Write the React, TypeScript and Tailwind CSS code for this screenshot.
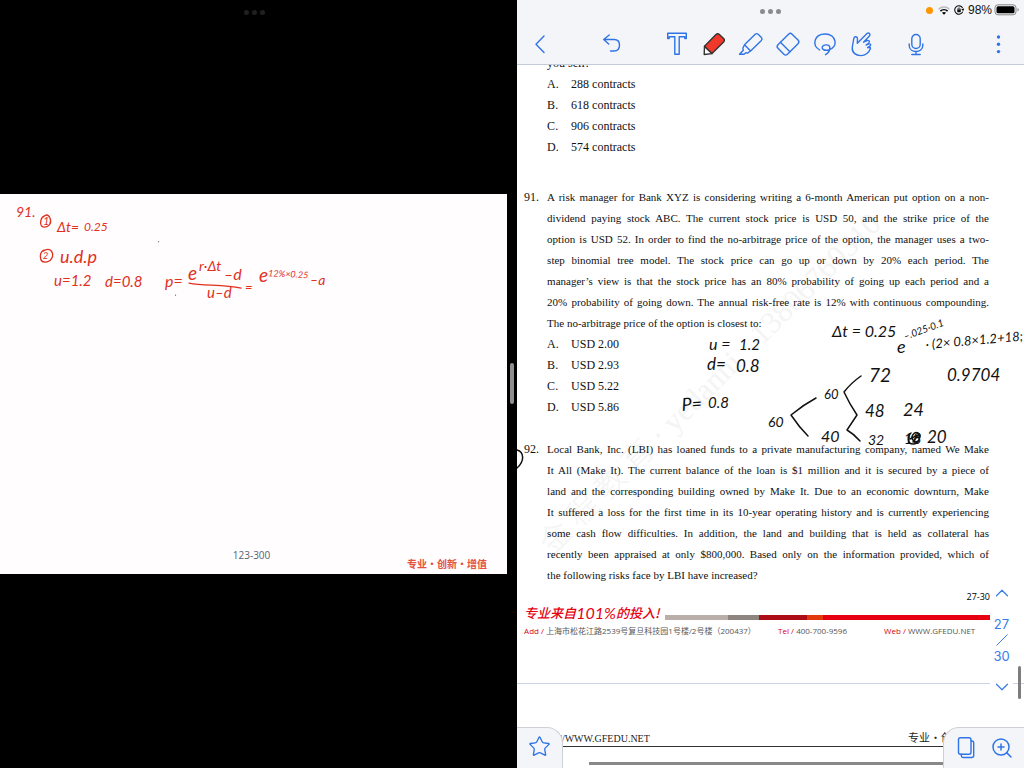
import type { ReactNode } from "react";
import { ChevronDown, ChevronUp, Star, ZoomIn } from "lucide-react";

const question91 = [
  "A risk manager for Bank XYZ is considering writing a 6-month American put option on a non-",
  "dividend paying stock ABC. The current stock price is USD 50, and the strike price of the",
  "option is USD 52. In order to find the no-arbitrage price of the option, the manager uses a two-",
  "step binomial tree model. The stock price can go up or down by 20% each period. The",
  "manager’s view is that the stock price has an 80% probability of going up each period and a",
  "20% probability of going down. The annual risk-free rate is 12% with continuous compounding.",
  "The no-arbitrage price of the option is closest to:",
];

const question92 = [
  "Local Bank, Inc. (LBI) has loaned funds to a private manufacturing company, named We Make",
  "It All (Make It). The current balance of the loan is $1 million and it is secured by a piece of",
  "land and the corresponding building owned by Make It. Due to an economic downturn, Make",
  "It suffered a loss for the first time in its 10-year operating history and is currently experiencing",
  "some cash flow difficulties. In addition, the land and building that is held as collateral has",
  "recently been appraised at only $800,000. Based only on the information provided, which of",
  "the following risks face by LBI have increased?",
];

function Lines({ lines }: { lines: string[] }) {
  return (
    <p className="text-[11px] leading-[21px]">
      {lines.map((line, i) => (
        <span
          key={line}
          className={
            i === lines.length - 1
              ? "block whitespace-nowrap"
              : "block whitespace-nowrap [text-align-last:justify]"
          }
        >
          {line}
        </span>
      ))}
    </p>
  );
}

function Options({ items }: { items: string[] }) {
  return (
    <ol>
      {items.map((item, i) => (
        <li key={item} className="flex">
          <span className="w-6">{"ABCD"[i]}.</span>
          <span>{item}</span>
        </li>
      ))}
    </ol>
  );
}

function Tool({ label, className, children }: { label: string; className: string; children: ReactNode }) {
  return (
    <button type="button" aria-label={label} className={`flex h-9 items-center justify-center ${className}`}>
      {children}
    </button>
  );
}

function Icon({ children }: { children: ReactNode }) {
  return (
    <svg
      width="24"
      height="24"
      viewBox="0 0 24 24"
      fill="none"
      stroke="currentColor"
      strokeWidth="1.4"
      strokeLinecap="round"
      strokeLinejoin="round"
      className="shrink-0 overflow-visible"
    >
      {children}
    </svg>
  );
}

function Dots({ className }: { className: string }) {
  return (
    <div className="flex gap-[3px]">
      <span className={`size-[5px] rounded-full ${className}`} />
      <span className={`size-[5px] rounded-full ${className}`} />
      <span className={`size-[5px] rounded-full ${className}`} />
    </div>
  );
}

function SlideInk() {
  return (
    <svg
      viewBox="0 194 507 380"
      className="absolute inset-0 size-full font-['Lato',sans-serif] text-[15px] italic"
      fill="#e0301e"
    >
      <text x="16" y="217" fontSize="14">91.</text>
      <text x="43" y="225" fontSize="11">1</text>
      <text x="57" y="232" fontSize="14">Δt=</text>
      <text x="84" y="231" fontSize="12">0.25</text>
      <text x="43" y="259" fontSize="9">2</text>
      <text x="60" y="263" fontSize="18">u.d.p</text>
      <text x="54" y="286" fontSize="15">u=1.2</text>
      <text x="105" y="287" fontSize="15">d=0.8</text>
      <text x="165" y="287" fontSize="16">p=</text>
      <text x="188" y="280" fontSize="19">e</text>
      <text x="199" y="271" fontSize="14">r·Δt</text>
      <text x="224" y="280" fontSize="16">–d</text>
      <text x="207" y="298" fontSize="15">u–d</text>
      <text x="245" y="292" fontSize="13">=</text>
      <text x="259" y="282" fontSize="19">e</text>
      <text x="268" y="276" fontSize="9" transform="rotate(3 268 276)">12%×0.25</text>
      <text x="310" y="285" fontSize="14">–a</text>
      <g fill="none" stroke="#e0301e" strokeWidth="1.3" strokeLinecap="round">
        <path d="M44 216c-4 2-5 11 0 11s8-4 6-9-5-3-7-1" />
        <path d="M44 250c-5 2-5 12 1 12s9-6 7-10-6-3-9-1" />
        <path d="M189 283c15 3 34 1 52 5" />
      </g>
      <circle cx="158.500" cy="241.500" r="0.700" fill="#777" />
      <circle cx="175.500" cy="295" r="0.600" />
    </svg>
  );
}

function PageInk() {
  return (
    <svg
      width="507"
      height="768"
      viewBox="517 0 507 768"
      className="pointer-events-none absolute top-0 left-0 font-['Lato',sans-serif] italic"
      fill="#111"
    >
      <text x="709" y="350" fontSize="16">u =</text>
      <text x="739" y="350" fontSize="15">1.2</text>
      <text x="707" y="370" fontSize="17">d=</text>
      <text x="736" y="372" fontSize="17">0.8</text>
      <text x="682" y="411" fontSize="18" transform="rotate(-4 682 411)">P=</text>
      <text x="708" y="408" fontSize="15">0.8</text>
      <text x="832" y="337" fontSize="16">Δt = 0.25</text>
      <text x="897" y="353" fontSize="18">e</text>
      <text x="905" y="340" fontSize="10" transform="rotate(-20 905 340)">–.025·0.1</text>
      <text x="926" y="349" fontSize="13" transform="rotate(-5 926 349)">· (2× 0.8×1.2+18;</text>
      <text x="869" y="382" fontSize="19">72</text>
      <text x="947" y="381" fontSize="17">0.9704</text>
      <text x="824" y="399" fontSize="13">60</text>
      <text x="768" y="427" fontSize="14">60</text>
      <text x="865" y="417" fontSize="17">48</text>
      <text x="903" y="416" fontSize="18">24</text>
      <text x="821" y="442" fontSize="16">40</text>
      <text x="868" y="445" fontSize="14">32</text>
      <text x="904" y="444" fontSize="15">18</text>
      <text x="927" y="443" fontSize="17">20</text>
      <g fill="none" stroke="#111" strokeWidth="1.500" strokeLinecap="round" strokeLinejoin="round">
        <path d="M816 398Q803 405 791 415Q799 427 808 436" />
        <path d="M861 376Q851 383 844 392Q849 403 857 415L847 430Q854 434 860 441" />
        <path d="M911 433c-4 3-4 11 2 11s9-9 5-11-9 5-4 8 7-5 4-6l-8 4m3 3 5-7" />
        <path d="M517 450C524 452 525 461 517 468" />
      </g>
    </svg>
  );
}

export default function App() {
  return (
    <div className="flex h-screen overflow-hidden bg-black font-['Liberation_Sans',sans-serif]">
      <section className="relative flex w-[50.5%] shrink-0 items-center pr-[10px]">
        <div className="absolute inset-x-0 top-[10px] flex justify-center pr-[9px]">
          <Dots className="bg-[#202020]" />
        </div>
        <div className="relative flex aspect-[4/3] w-full flex-col justify-end bg-[#fffdfe]">
          <SlideInk />
          <p className="pr-1 text-center font-['Open_Sans','Noto_Sans',sans-serif] text-[10px] leading-[10px] text-[#566273]">
            123-300
          </p>
          <p className="mb-[6px] pr-5 text-right font-['Noto_Sans_CJK_SC',sans-serif] text-[10px] leading-[8px] font-bold text-[#e55141]">
            专业・创新・增值
          </p>
        </div>
        <div className="absolute top-[363px] right-[3px] h-[41px] w-1 rounded-full bg-[#8e8e93]" />
      </section>

      <main className="relative flex min-w-0 flex-1 flex-col bg-white">
        <header className="relative z-10 flex h-[65px] flex-col border-b border-[#c3cad8] bg-[#f4f5f9]">
          <div className="relative flex h-5 items-center justify-end pr-[5px]">
            <div className="absolute inset-x-0 top-[9px] flex justify-center">
              <Dots className="bg-[#8b8b8f]" />
            </div>
            <div className="flex h-4 items-center">
              <span className="mr-[5px] size-[7px] rounded-full bg-[#ff9500]" />
              <svg width="12" height="9" viewBox="0 0 12 9" fill="none" strokeWidth="1.600" aria-label="Wi-Fi">
                <path d="M.6 3.200C3.500.3 8.500.3 11.400 3.200" stroke="#bbb" />
                <path d="M2.400 5.200C4.400 3.300 7.600 3.300 9.600 5.200" stroke="#000" />
                <path d="M4 6.700Q6 5.300 8 6.700L6 8.800Z" fill="#000" />
              </svg>
              <svg width="10" height="10" viewBox="0 0 10 10" fill="none" stroke="#111" className="ml-1" aria-label="Rotation lock">
                <path d="M8.600 3A4.200 4.200 0 1 0 8.800 6.600M9.800 3.600 9 5.200 7.700 4" strokeWidth="1.100" />
                <path d="M3.500 4.700h3v2.300h-3z" fill="#111" strokeWidth=".5" />
                <path d="M4 4.700V3.800a1 1 0 0 1 2 0v.9" strokeWidth=".8" />
              </svg>
              <span className="ml-1 font-['Liberation_Sans',sans-serif] text-[12px] leading-4 text-[#111]">98%</span>
              <svg width="25" height="12" viewBox="0 0 25 12" className="ml-[2px]" aria-label="Battery">
                <rect x="1" y=".8" width="21" height="10" rx="3" fill="none" stroke="#888" />
                <rect x="2.500" y="2.300" width="18" height="7" rx="1.600" fill="#000" />
                <path d="M23.500 4v3.600q1.300-.6 1.300-1.800T23.500 4" fill="#888" />
              </svg>
            </div>
          </div>
          <nav aria-label="Annotation tools" className="mt-1 flex h-10 items-center pl-[11px] text-[#2f74e6]">
            <Tool label="Back" className="w-6">
              <Icon><path d="M16 4 8 12.200 16 20.500" /></Icon>
            </Tool>
            <Tool label="Undo" className="ml-12 w-6">
              <Icon><path d="M9.200 3 3.700 7.500 8.700 12M3.700 7.500H14C17.500 7.500 19.500 9.500 19.500 13s-2 6-5.500 6h-3.500" /></Icon>
            </Tool>
            <div className="ml-[35px] flex gap-px">
              <Tool label="Text" className="w-9">
                <Icon><path d="M2.700 1.300h18.600v5.200h-1.500V4.700h-5.600v17.500H9.800V4.700H4.200v1.800H2.700Z" /></Icon>
              </Tool>
              <Tool label="Pen" className="w-9">
                <Icon>
                  <g stroke="#333">
                    <path d="M2.200 22.500 2.500 14.200 10 21.600Z" fill="#fff" />
                    <path d="M2.500 14.200 14 2.500q1.700-1.600 3.400 0l4.200 4q1.600 1.700 0 3.400L10 21.600Z" fill="#f0392b" />
                  </g>
                </Icon>
              </Tool>
              <Tool label="Highlighter" className="w-9">
                <Icon><path d="M5.500 12.700 16.200 2.200q1.500-1.200 3 0l3.200 3.200q1.300 1.500 0 3L11.600 18.900 5.500 12.700Zm0 0-1.700 3.500.5 2L.5 22.300H5l1.800-1.600 1.600.5 3.200-2.300" /></Icon>
              </Tool>
              <Tool label="Eraser" className="w-9">
                <Icon>
                  <g transform="rotate(-45 12 12.200)">
                    <rect x="2" y="5.500" width="20" height="13.400" rx="2.500" />
                    <path d="M8 5.500v13.400" />
                  </g>
                </Icon>
              </Tool>
              <Tool label="Lasso" className="w-9">
                <Icon><path d="M6.700 18C-1.500 13.500 1 2 12.200 2S26 15.500 15.500 18c-4 .8-6.800-.5-6.300-2.800.6-3 7.300-3.300 7.600 0 .2 3-1.800 6-4.300 7.500" /></Icon>
              </Tool>
              <Tool label="Touch" className="w-9">
                <Icon><path d="M2.300 15 3.800 6.500Q4.300 4.500 6 4.800t1.500 2.300L7.300 11.200 17 1.600q1.300-1.200 2.500-.1 1.100 1.200-.1 2.600L13.500 10.200l3.600-1.700q2-.4 2.300 1 .2 1-3.300 3.500l2.700-1.200q1.900-.2 1.900 1.200 0 1.100-3.100 2.700l1.700-.4q1.400.1 1.100 1.500C18.800 20.800 15.500 23.600 10.700 23.600S1.500 20.500 2.300 15" /></Icon>
              </Tool>
            </div>
            <Tool label="Record" className="ml-[18px] w-9">
              <Icon>
                <rect x="7.800" y="2.500" width="8.400" height="14" rx="4.200" />
                <path d="M5.200 12v1.500c0 8 13.600 8 13.600 0V12M12 19.500v3M7.800 22.500h8.400" />
              </Icon>
            </Tool>
            <Tool label="More" className="mr-[14px] ml-auto w-6">
              <Icon>
                <g fill="currentColor" stroke="none">
                  <circle cx="12.500" cy="5" r="1.700" />
                  <circle cx="12.500" cy="12.300" r="1.700" />
                  <circle cx="12.500" cy="19.600" r="1.700" />
                </g>
              </Icon>
            </Tool>
          </nav>
        </header>

        <div className="relative min-h-0 flex-1 overflow-hidden">
          <div
            aria-hidden="true"
            className="absolute top-[468px] left-[28px] origin-left -rotate-45 font-['Liberation_Serif','Noto_Sans_CJK_SC',serif] text-[31px] leading-8 font-light whitespace-nowrap text-[#f4f4f4]"
          >
            金 程 教 育 · yedanni · 13806760310
          </div>
          <article className="relative -mt-3 pr-[35px] pl-[7px] font-['Liberation_Serif',serif] text-[12px] leading-[21px] text-[#111]">
            <div className="pl-[23px]">
              <p>you sell?</p>
              <Options items={["288 contracts", "618 contracts", "906 contracts", "574 contracts"]} />
            </div>
            <div className="mt-[29px] grid grid-cols-[23px_minmax(0,1fr)]">
              <span>91.</span>
              <div>
                <Lines lines={question91} />
                <Options items={["USD 2.00", "USD 2.93", "USD 5.22", "USD 5.86"]} />
              </div>
            </div>
            <div className="mt-[21px] grid grid-cols-[23px_minmax(0,1fr)]">
              <span>92.</span>
              <Lines lines={question92} />
            </div>
          </article>

          <footer className="relative pr-[34px] pl-[7px] font-['Open_Sans','Noto_Sans_CJK_SC',sans-serif] text-[8px] text-[#555]">
            <p className="pt-[5px] text-right text-[9px] leading-3 text-black">27-30</p>
            <div className="flex h-5 items-center">
              <p className="flex w-[141px] shrink-0 items-center font-['Noto_Sans_CJK_SC',sans-serif] text-[13px] font-medium whitespace-nowrap text-[#e60012] italic">
                专业来自
                <span className="font-['Lato','Noto_Sans',sans-serif] text-[16px] font-normal">101%</span>
                <span>的投入!</span>
              </p>
              <div className="mt-2 flex h-[5px] flex-1">
                <span className="w-[63px] bg-[#b9afa8]" />
                <span className="w-[31px] bg-[#8e8580]" />
                <span className="w-12 bg-[#ad0d16]" />
                <span className="w-4 bg-[#e2390f]" />
                <span className="flex-1 bg-[#e60012]" />
              </div>
            </div>
            <address className="flex leading-4 whitespace-nowrap not-italic">
              <span className="w-[254px]">
                <span className="text-[#d7000f]">Add / </span>上海市松花江路2539号复旦科技园1号楼/2号楼（200437）
              </span>
              <span className="w-[106px]">
                <span className="text-[#d7000f]">Tel / </span>400-700-9596
              </span>
              <span>
                <span className="text-[#d7000f]">Web / </span>
                <a href="#web">WWW.GFEDU.NET</a>
              </span>
            </address>
          </footer>

          <div className="mt-11 border-t border-[#ccd3e6] pt-[46px]">
            <div className="flex h-[17px] items-center justify-between border-b border-[#333] pr-[40px] pl-[42px] font-['Liberation_Serif','Noto_Sans_CJK_SC',serif] text-[10px] text-[#222]">
              <span>//WWW.GFEDU.NET</span>
              <span className="w-[76px] overflow-hidden text-[11px] whitespace-nowrap">专业・创新・增值</span>
            </div>
            <div className="mt-[15px] mr-[60px] ml-[72px] h-[3px] bg-[#888]" />
          </div>
        </div>

        <PageInk />

        <nav
          aria-label="Pages"
          className="absolute top-[582px] right-[11px] flex w-[23px] flex-col items-center bg-white font-['Inter',sans-serif] text-[13px] leading-4 text-[#3b7be8]"
        >
          <button type="button" aria-label="Previous page"><ChevronUp size={22} strokeWidth={1.3} /></button>
          <span className="mt-3">27</span>
          <svg width="12" height="14" viewBox="0 0 12 14" stroke="currentColor" className="my-px"><path d="M.5 12.500 11.500 1.500" /></svg>
          <span>30</span>
          <button type="button" aria-label="Next page" className="mt-3"><ChevronDown size={22} strokeWidth={1.3} /></button>
        </nav>
        <div className="absolute top-[666px] right-[3px] h-[33px] w-[3px] rounded-full bg-[#7d7d7d]" />

        <div className="absolute bottom-0 left-0 flex h-[41px] w-[46px] items-center justify-center rounded-tr-2xl border-t border-r border-[#cdd0d6] bg-[#f4f5f9] text-[#2f74e6]">
          <button type="button" aria-label="Bookmark" className="mt-[-3px]"><Star size={23} strokeWidth={1.4} /></button>
        </div>
        <div className="absolute right-0 bottom-0 flex h-[41px] w-[81px] items-center gap-3 rounded-tl-2xl border-t border-l border-[#cdd0d6] bg-[#f4f5f9] pl-[10px] text-[#2f74e6]">
          <Tool label="Page list" className="w-6">
            <Icon>
              <rect x="4.500" y="1.800" width="12.500" height="16.500" rx="2" />
              <path d="M17 5h1q1.700 0 1.700 1.700V19.500q0 2-2 2H9q-1.700 0-1.700-1.700v-1.500" />
            </Icon>
          </Tool>
          <Tool label="Zoom" className="w-6">
            <ZoomIn size={24} strokeWidth={1.5} />
          </Tool>
        </div>
      </main>
    </div>
  );
}
